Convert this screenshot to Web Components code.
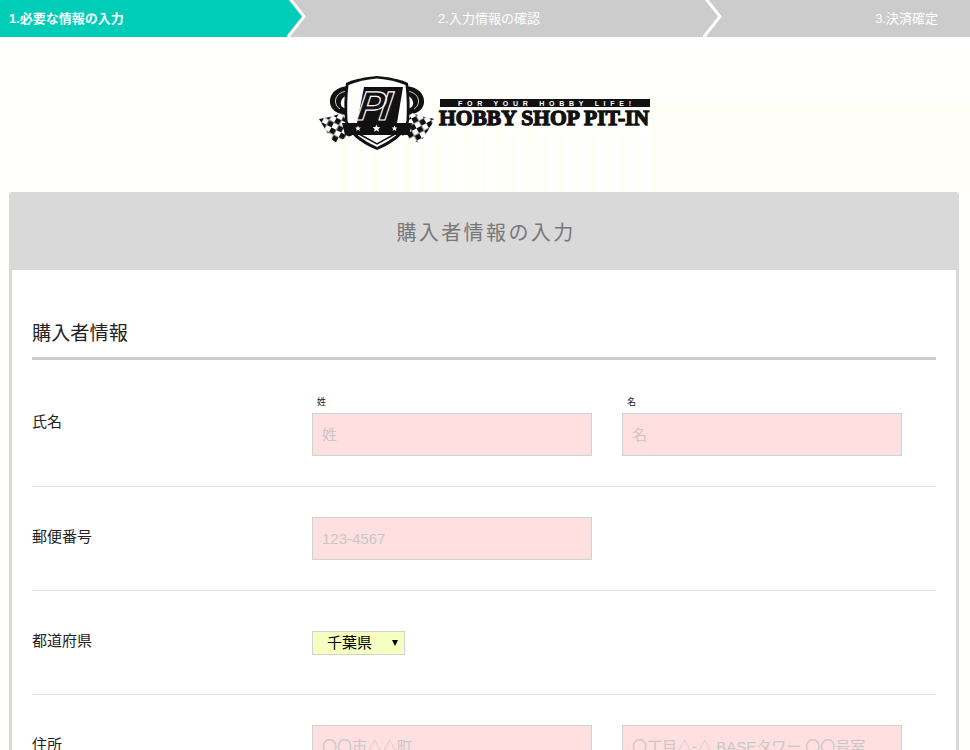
<!DOCTYPE html>
<html lang="ja"><head><meta charset="utf-8"><title>購入者情報の入力</title>
<style>
html,body{margin:0;padding:0;overflow:hidden;height:750px}
body{background:#fffffd;font-family:"Liberation Sans","Noto Sans CJK JP",sans-serif;color:#222}
</style></head><body>
<step-bar></step-bar>
<site-logo></site-logo>
<form-card heading="購入者情報の入力">
  <section-title>購入者情報</section-title>
  <form-row label="氏名" first>
    <text-field cap="姓" hint="姓"></text-field>
    <text-field cap="名" hint="名"></text-field>
  </form-row>
  <form-row label="郵便番号"><text-field hint="123-4567"></text-field></form-row>
  <form-row label="都道府県"><pref-select value="千葉県"></pref-select></form-row>
  <form-row label="住所">
    <text-field hint="〇〇市△△町"></text-field>
    <text-field hint="〇丁目△-△ BASEタワー 〇〇号室"></text-field>
  </form-row>
</form-card>
<script>
const FONT='"Liberation Sans","Noto Sans CJK JP",sans-serif';
function def(name,html){
  customElements.define(name,class extends HTMLElement{
    connectedCallback(){
      if(this.shadowRoot)return;
      const r=this.attachShadow({mode:'open'});
      r.innerHTML=typeof html==='function'?html(this):html;
    }
  });
}
const chev=`<svg class="chev" width="22" height="37" viewBox="0 0 22 37"><path d="M3 -1 L17 16.5 L0 38" fill="none" stroke="#fff" stroke-width="3"/></svg>`;
def('step-bar',`<style>
:host{display:flex;height:37px;background:#ccc;color:#fff;font:13px/37px ${FONT};position:relative;overflow:hidden}
.s{position:relative;box-sizing:border-box;white-space:nowrap}
.a{flex:0 0 287px;background:#00cdb8;font-weight:bold;padding-left:9px}
.a::after{content:"";position:absolute;left:100%;top:0;width:17px;height:37px;background:#00cdb8;clip-path:polygon(0 0,3px 0,17px 16.5px,0 37px)}
.b{flex:0 0 416px;text-align:center;padding-right:12px}
.c{flex:1;text-align:right;padding-right:32px}
.chev{position:absolute;top:0;left:100%;z-index:2}
</style>
<div class="s a">1.必要な情報の入力${chev}</div>
<div class="s b">2.入力情報の確認${chev}</div>
<div class="s c">3.決済確定</div>`);
def('site-logo',`<style>
:host{display:flex;justify-content:center;height:155px;box-sizing:border-box;padding:38px 0 0;
 background:linear-gradient(#fffff7,#fffff7) 650px 64px/320px 91px no-repeat,
 repeating-linear-gradient(90deg,#fffff8 0 9px,#fffffd 9px 17px,#fffff9 17px 23px,#fffffd 23px 31px) 340px 95px/310px 60px no-repeat}
svg{display:block;margin-left:-1px}
.tag{font:bold 7px ${FONT};fill:#fff}
.name{font:bold 21.500px "Liberation Serif",serif;fill:#111;stroke:#111;stroke-width:1.300px}
.pi{font:italic bold 41px "Liberation Sans",sans-serif;fill:#111;stroke:#fff;stroke-width:1.200px;letter-spacing:-5px}
</style>
<svg width="334" height="76" viewBox="318 74 334 76" xmlns="http://www.w3.org/2000/svg">
  <defs>
    <pattern id="ck" width="11" height="11" patternUnits="userSpaceOnUse" patternTransform="rotate(-28)">
      <rect width="11" height="11" fill="#fff"/><rect width="5.500" height="5.500" fill="#111"/><rect x="5.500" y="5.500" width="5.500" height="5.500" fill="#111"/>
    </pattern>
    <pattern id="ck2" width="11" height="11" patternUnits="userSpaceOnUse" patternTransform="rotate(28)">
      <rect width="11" height="11" fill="#fff"/><rect width="5.500" height="5.500" fill="#111"/><rect x="5.500" y="5.500" width="5.500" height="5.500" fill="#111"/>
    </pattern>
  </defs>
  <!-- wings -->
  <path d="M348 85 C336 86 329 93 330 102 C331 110 339 114 349 114 L349 108 C343 108 340 105 341 101 C342 97 344 95 349 94 Z" fill="#111"/>
  <path d="M347 90 C340 91 335 95 335.500 101 C336 104 337 106 340 108" fill="none" stroke="#fff" stroke-width=".8"/>
  <path d="M406 85 C418 86 425 93 424 102 C423 110 415 114 405 114 L405 108 C411 108 414 105 413 101 C412 97 410 95 405 94 Z" fill="#111"/>
  <path d="M407 90 C414 91 419 95 418.500 101 C418 104 417 106 414 108" fill="none" stroke="#fff" stroke-width=".8"/>
  <!-- flags -->
  <path d="M319 118 C326 117 335 115 342 112 L353 134 C347 136 341 139 335 142 C329 135 324 126 319 118 Z" fill="url(#ck2)"/>
  <path d="M435 118 C428 117 419 115 412 112 L401 134 C407 136 413 139 419 142 C425 135 430 126 435 118 Z" fill="url(#ck)"/>
  <!-- shield -->
  <path d="M377 75 C389 76 399 78 408 82 C410 95 410 108 409 120 C406 133 392 143 377 149 C362 143 348 133 345 120 C344 108 344 95 346 82 C355 78 365 76 377 75 Z" fill="#111"/>
  <path d="M377 77.500 C388 78.500 397 80.500 405.500 84 C407 96 407 108 406.500 120 C403 131 390 140 377 146 C364 140 351 131 347.500 120 C347 108 347 96 348.500 84 C357 80.500 366 78.500 377 77.500 Z" fill="#fff"/>
  <path d="M359 133 L377 143 L395 133" fill="none" stroke="#111" stroke-width="1.500"/>
  <!-- monogram plate -->
  <path d="M364 86 L403 86 L397 122 L357 122 Z" fill="#111"/>
  <text class="pi" transform="translate(356 119) skewX(-8)" x="0" y="0">PI</text>
  <!-- band -->
  <path d="M342 122 L412 122 L409 134 L345 134 Z" fill="#111"/>
  <g fill="#fff">
    <path d="M358 124.500l.8 1.900 2 .2-1.500 1.300.5 2-1.800-1.100-1.800 1.100.5-2-1.500-1.300 2-.2z"/>
    <path d="M376.500 123.500l1.100 2.600 2.800.2-2.100 1.800.7 2.700-2.500-1.500-2.500 1.500.7-2.700-2.100-1.800 2.800-.2z"/>
    <path d="M394.500 124.500l.8 1.900 2 .2-1.500 1.300.5 2-1.800-1.100-1.800 1.100.5-2-1.500-1.300 2-.2z"/>
  </g>
  <!-- wordmark -->
  <rect x="440" y="98" width="210" height="8" fill="#111"/>
  <text class="tag" x="458" y="104.700" textLength="173" lengthAdjust="spacing">FOR YOUR HOBBY LIFE!</text>
  <text class="name" x="439" y="124" textLength="210" lengthAdjust="spacingAndGlyphs">HOBBY SHOP PIT-IN</text>
</svg>`);
def('form-card',el=>`<style>
:host{display:block;box-sizing:border-box;margin:0 11px 0 9px;border:3px solid #d8d8d8;border-top:0;border-radius:4px 4px 0 0;background:#fff}
h1{margin:0 -3px;height:78px;box-sizing:border-box;padding-left:4px;background:#d9d9d9;border-radius:4px 4px 0 0;color:#777;font:normal 20px/82px ${FONT};letter-spacing:2.400px;text-align:center}
.b{padding:0 20px}
</style><h1>${el.getAttribute('heading')}</h1><div class="b"><slot></slot></div>`);
def('section-title',`<style>
:host{display:block;height:90px;box-sizing:border-box;padding-top:50px;border-bottom:3px solid #ccc;font:19.200px/27px ${FONT};color:#222}
</style><slot></slot>`);
def('form-row',el=>{const f=el.hasAttribute('first');return `<style>
:host{display:grid;grid-template-columns:280px 1fr;box-sizing:border-box;height:${f?'127px':'104px'};padding-top:${f?'53px':'30px'};border-bottom:1px solid #e2e2e2}
.l{font:15px/20px ${FONT};color:#222;padding-top:${f?'0':'10px'};margin-top:${f?'-1px':'0'}}
.f{display:flex;gap:30px;align-items:flex-start}
</style><div class="l">${el.getAttribute('label')}</div><div class="f"><slot></slot></div>`});
def('text-field',el=>{const c=el.getAttribute('cap');return `<style>
:host{display:block;width:280px;position:relative}
.cap{position:absolute;left:5px;top:-18px;font:9px/14px ${FONT};color:#222}
.i{box-sizing:border-box;height:43px;background:#ffdfdf;border:1px solid #d2d2d2;box-shadow:0 0 0 1px #f2e4e4 inset;padding:0 9px;font:15px/42px ${FONT};color:#c8c8c8;white-space:nowrap;overflow:hidden}
</style>${c?`<span class="cap">${c}</span>`:''}<div class="i">${el.getAttribute('hint')}</div>`});
def('pref-select',el=>`<style>
:host{display:block;width:93px;height:24px;margin-top:10px;box-sizing:border-box;background:#f5ffc0;border:1px solid #d2d2d2;position:relative;font:15px/22px ${FONT};color:#000;padding-left:14px}
i{position:absolute;left:79px;top:8px;width:0;height:0;border:3.500px solid transparent;border-top:6px solid #000;border-bottom:0}
</style>${el.getAttribute('value')}<i></i>`);
</script>
</body></html>
